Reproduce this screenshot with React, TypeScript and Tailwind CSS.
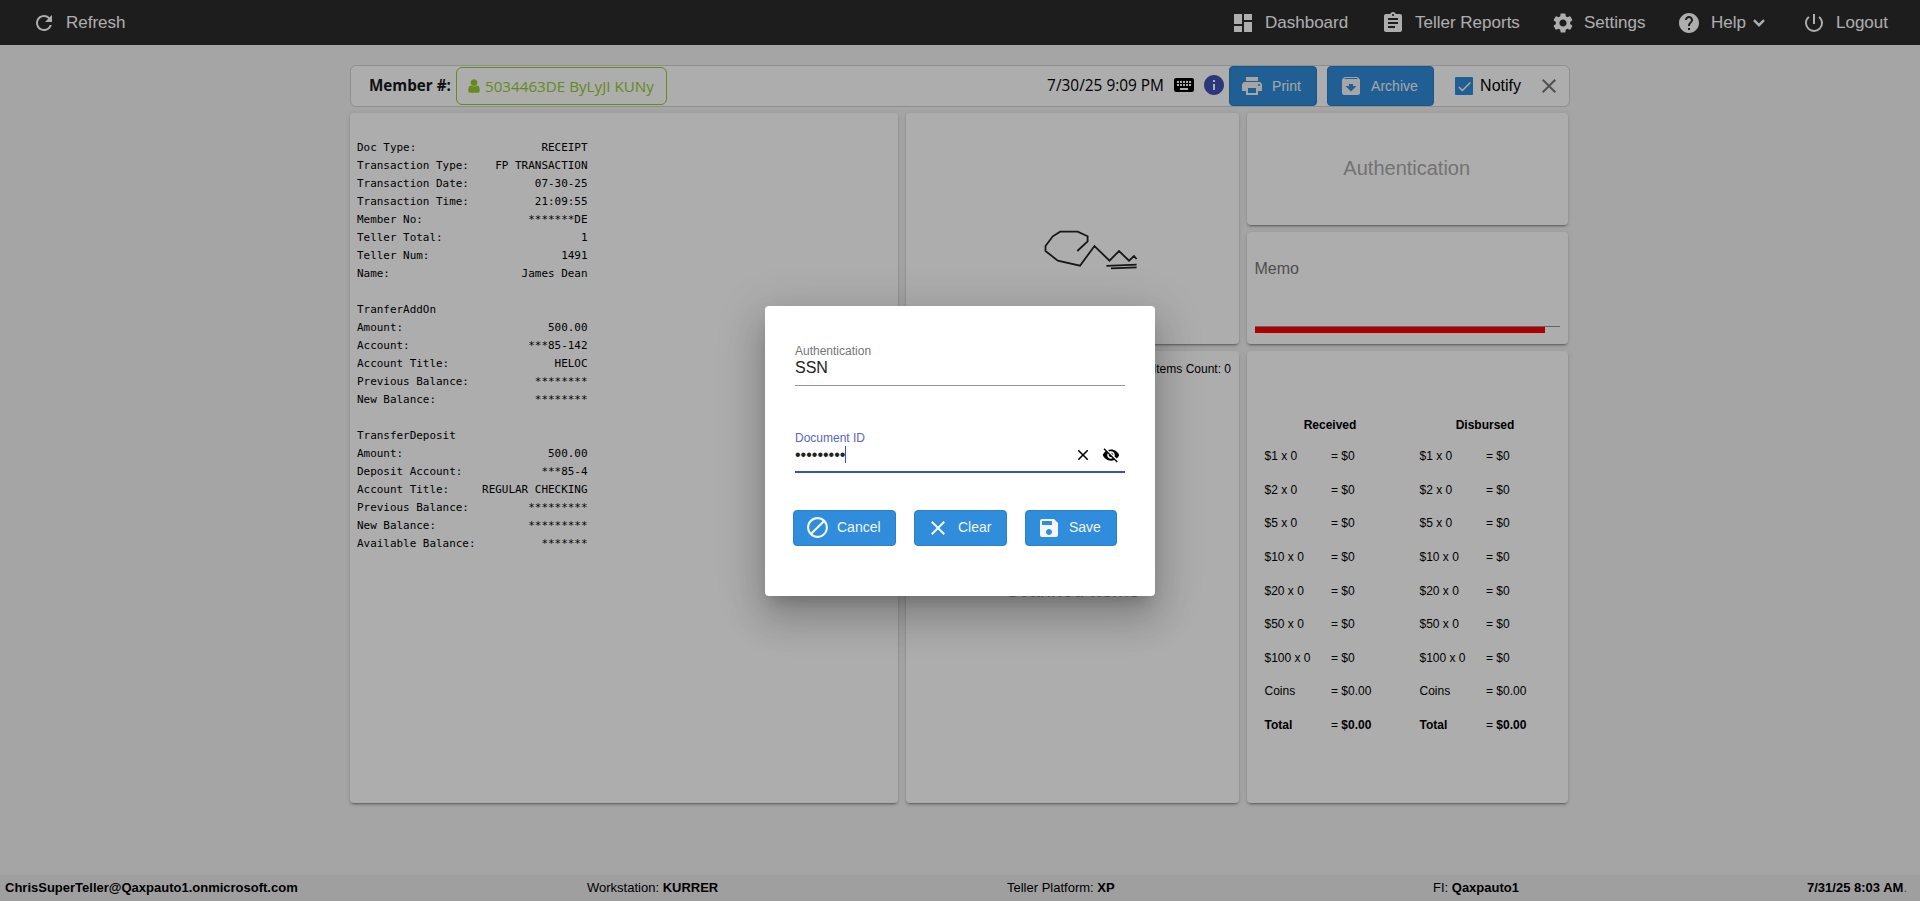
import { useState } from "react";
import {
  MdArchive,
  MdAssignment,
  MdBlock,
  MdCheck,
  MdClose,
  MdDashboard,
  MdHelp,
  MdInfo,
  MdKeyboard,
  MdPowerSettingsNew,
  MdPrint,
  MdRefresh,
  MdSave,
  MdSettings,
  MdVisibilityOff,
} from "react-icons/md";

const RECEIPT_WIDTH = 35;

const receipt: [string, string][] = [
  ["Doc Type:", "RECEIPT"],
  ["Transaction Type:", "FP TRANSACTION"],
  ["Transaction Date:", "07-30-25"],
  ["Transaction Time:", "21:09:55"],
  ["Member No:", "*******DE"],
  ["Teller Total:", "1"],
  ["Teller Num:", "1491"],
  ["Name:", "James Dean"],
  ["", ""],
  ["TranferAddOn", ""],
  ["Amount:", "500.00"],
  ["Account:", "***85-142"],
  ["Account Title:", "HELOC"],
  ["Previous Balance:", "********"],
  ["New Balance:", "********"],
  ["", ""],
  ["TransferDeposit", ""],
  ["Amount:", "500.00"],
  ["Deposit Account:", "***85-4"],
  ["Account Title:", "REGULAR CHECKING"],
  ["Previous Balance:", "*********"],
  ["New Balance:", "*********"],
  ["Available Balance:", "*******"],
];

const denominations = ["$1", "$2", "$5", "$10", "$20", "$50", "$100"];

const card =
  "rounded bg-white shadow-[0_3px_1px_-2px_rgba(0,0,0,0.2),0_2px_2px_0_rgba(0,0,0,0.14),0_1px_5px_0_rgba(0,0,0,0.12)]";

const blueButton =
  "flex items-center rounded border border-[#2a7fc6] bg-[#308ddb] text-sm text-[#f5f5f5]";

function UserIcon() {
  return (
    <svg width="12" height="16" viewBox="0 0 1280 1792" fill="currentColor">
      <path d="M1280 1399q0 109-62.5 187t-150.5 78h-854q-88 0-150.5-78t-62.5-187q0-85 8.5-160.5t31.5-152 58.5-131 94-89 134.5-34.5q131 128 313 128t313-128q76 0 134.5 34.5t94 89 58.5 131 31.5 152 8.5 160.5zm-256-887q0 159-112.5 271.5t-271.5 112.5-271.5-112.5-112.5-271.5 112.5-271.5 271.5-112.5 271.5 112.5 112.5 271.5z" />
    </svg>
  );
}

function Chevron() {
  return (
    <svg
      width="14"
      height="10"
      viewBox="0 0 14 10"
      fill="none"
      stroke="currentColor"
      strokeWidth="2.4"
      className="-ml-[4px]"
    >
      <path d="M2 2.2L7 7.2L12 2.2" />
    </svg>
  );
}

function Signature() {
  return (
    <svg
      width="96"
      height="44"
      viewBox="1043 228 96 44"
      fill="none"
      stroke="#222"
      strokeWidth="1.8"
    >
      <path d="M1077.3 251L1087.6 241.3V236.3L1077.7 231.7H1060.1L1052.8 236.3L1045.5 246V251L1057.8 260.7L1080 265.7L1094.5 246L1109.5 260.7L1119 251L1129 260.7L1134 256L1136.6 259" />
      <path d="M1106.4 265.8L1136.6 264.6M1111 268.3L1136.6 267.4" />
    </svg>
  );
}

function TopNav() {
  return (
    <nav className="flex h-[45px] items-center bg-[#2c2c2c] pl-8 pr-8 pt-px text-[17px] text-white">
      <MdRefresh size={24} />
      <span className="ml-[10px]">Refresh</span>

      <div className="ml-auto flex items-center">
        <div className="flex w-[150px] items-center gap-[10px]">
          <MdDashboard size={24} />
          Dashboard
        </div>
        <div className="flex w-[170px] items-center gap-[10px]">
          <MdAssignment size={24} />
          Teller Reports
        </div>
        <div className="flex w-[126px] items-center gap-[9px]">
          <MdSettings size={24} />
          Settings
        </div>
        <div className="flex w-[125px] items-center gap-[10px]">
          <MdHelp size={24} />
          Help
          <Chevron />
        </div>
        <div className="flex items-center gap-[10px]">
          <MdPowerSettingsNew size={24} />
          Logout
        </div>
      </div>
    </nav>
  );
}

function MemberBar() {
  return (
    <div className="flex h-[42px] w-[1220px] items-center rounded-md border border-[#d3d3d3] bg-white pr-2">
      <span className="mb-px ml-[18px] w-[87px] whitespace-nowrap font-['Open_Sans'] text-[15.2px] font-bold text-[#16181b]">
        Member #:
      </span>
      <div className="flex h-[38px] w-[211px] items-center gap-[5px] whitespace-nowrap rounded-md border border-[#94cd2c] pl-[11px] font-['Open_Sans'] text-[15.2px] text-[#94cd2c]">
        <UserIcon />
        <span>5034463DE ByLyJI KUNy</span>
      </div>

      <span className="ml-auto w-[125px] whitespace-nowrap font-['Open_Sans'] text-[15.4px] text-black">
        7/30/25 9:09 PM
      </span>
      <MdKeyboard size={24} className="mb-0.5 text-black" />
      <MdInfo size={24} className="mb-0.5 ml-[6px] text-[#3f51b5]" />
      <button className={`${blueButton} ml-[3px] h-10 w-[88px] gap-2 pl-[10px]`}>
        <MdPrint size={24} />
        Print
      </button>
      <button className={`${blueButton} ml-[10px] h-10 w-[107px] gap-2 pl-[11px]`}>
        <MdArchive size={24} />
        Archive
      </button>
      <div className="ml-[21px] flex h-[18px] w-[18px] items-center justify-center rounded-[1px] bg-[#308ddb] text-white">
        <MdCheck size={17} />
      </div>
      <span className="ml-[7px] text-base text-black">Notify</span>
      <MdClose size={24} className="ml-[16px] text-[#777]" />
    </div>
  );
}

function CashColumn({ title }: { title: string }) {
  return (
    <div className="w-[155px] text-xs">
      <div className="h-[31.3px] text-center font-bold">{title}</div>
      {denominations.map((d) => (
        <div key={d} className="flex h-[33.6px]">
          <span className="ml-3 w-[66.5px]">{d} x 0</span>
          <span>= $0</span>
        </div>
      ))}
      <div className="flex h-[33.6px]">
        <span className="ml-3 w-[66.5px]">Coins</span>
        <span>= $0.00</span>
      </div>
      <div className="flex">
        <span className="ml-3 w-[66.5px] font-bold">Total</span>
        <span>
          = <b>$0.00</b>
        </span>
      </div>
    </div>
  );
}

function Footer() {
  return (
    <footer className="flex h-[26px] items-center bg-[#eaebec] pb-px text-[13px] text-black">
      <div className="w-[587px] pl-[5px] font-bold">
        ChrisSuperTeller@Qaxpauto1.onmicrosoft.com
      </div>
      <div className="w-[420px]">
        Workstation: <b>KURRER</b>
      </div>
      <div className="w-[426px]">
        Teller Platform: <b>XP</b>
      </div>
      <div>
        FI: <b>Qaxpauto1</b>
      </div>
      <div className="ml-auto mr-[13px]">
        <b>7/31/25 8:03 AM</b>
        <span className="text-gray-500">.</span>
      </div>
    </footer>
  );
}

function AuthDialog() {
  const [documentId] = useState("123456789");

  return (
    <div className="h-[290px] w-[390px] rounded bg-white px-[30px] pt-[38px] shadow-[0_11px_15px_-7px_rgba(0,0,0,0.2),0_24px_38px_3px_rgba(0,0,0,0.14),0_9px_46px_8px_rgba(0,0,0,0.12)]">
      <div className="h-[42px] border-b border-[#949494]">
        <div className="text-xs leading-[14px] text-[#757575]">Authentication</div>
        <div className="text-base leading-[20px] text-[#212121]">SSN</div>
      </div>

      <div className="mt-[45px] h-[42px] border-b-2 border-[#3f51b5]">
        <div className="text-xs leading-[14px] text-[#5766bf]">Document ID</div>
        <div className="flex h-[20px] items-center">
          <span className="text-base leading-[20px] text-[#212121]">
            {"•".repeat(documentId.length)}
          </span>
          <span className="h-[17px] w-px bg-[#3f51b5]" />
          <MdClose size={18} className="ml-auto mt-px text-black" />
          <MdVisibilityOff size={18} className="ml-[10px] mr-[5px] mt-px text-black" />
        </div>
      </div>

      <div className="-ml-0.5 mt-[37px] flex gap-[18px]">
        <button className={`${blueButton} h-9 w-[103px] gap-[7px] pl-[11px]`}>
          <MdBlock size={25} />
          <span className="mb-0.5">Cancel</span>
        </button>
        <button className={`${blueButton} h-9 w-[93px] gap-2 pl-[11px]`}>
          <MdClose size={24} />
          <span className="mb-0.5">Clear</span>
        </button>
        <button className={`${blueButton} h-9 w-[92px] gap-2 pl-[11px]`}>
          <MdSave size={24} />
          <span className="mb-0.5">Save</span>
        </button>
      </div>
    </div>
  );
}

export default function App() {
  return (
    <main className="relative flex h-[901px] w-[1920px] flex-col overflow-hidden bg-[#f3f3f3] font-['Liberation_Sans',sans-serif] text-black">
      <TopNav />

      <div className="ml-[350px] mt-5 flex-1">
        <MemberBar />

        <div className="mt-[6px] flex h-[690px] gap-[7.5px]">
          {/* receipt */}
          <section className={`${card} w-[548px] pl-[7px] pt-[26px]`}>
            <pre className="font-['DejaVu_Sans_Mono',monospace] text-[10.95px] leading-[18px]">
              {receipt
                .map(([k, v]) => k + v.padStart(RECEIPT_WIDTH - k.length))
                .join("\n")}
            </pre>
          </section>

          {/* signature + scanned items */}
          <div className="flex w-[333.5px] flex-col gap-[7px]">
            <section className={`${card} h-[231px] pl-[137px] pt-[115px]`}>
              <Signature />
            </section>
            <section className={`${card} flex-1 pt-[9px]`}>
              <div className="h-[216px] pr-2 pt-px text-right text-xs">Items Count: 0</div>
              <div className="text-center text-xl text-[#aaa]">Scanned Items</div>
            </section>
          </div>

          {/* authentication, memo, cash */}
          <div className="flex w-[321.5px] flex-col gap-[7px]">
            <section
              className={`${card} flex h-[112px] items-center justify-center pb-[3px] pr-px text-xl text-[#aaa]`}
            >
              Authentication
            </section>
            <section className={`${card} h-[112px] px-2 pt-[25px]`}>
              <div className="h-[70px] border-b border-[#949494] text-base text-[#757575]">
                Memo
              </div>
              <div className="h-[6px] w-[290px] bg-[#ff0000]" />
            </section>
            <section className={`${card} flex flex-1 pl-[6px] pt-[66px]`}>
              <CashColumn title="Received" />
              <CashColumn title="Disbursed" />
            </section>
          </div>
        </div>
      </div>

      <Footer />

      {/* backdrop with the dialog on top */}
      <div className="absolute inset-0 flex items-center justify-center bg-black/32">
        <AuthDialog />
      </div>
    </main>
  );
}
